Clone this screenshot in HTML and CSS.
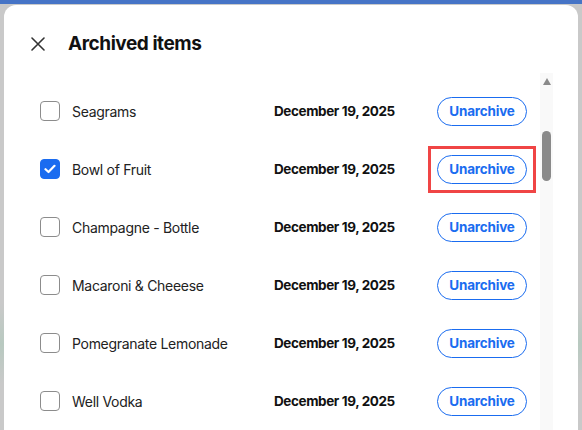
FILE: index.html
```html
<!DOCTYPE html>
<html>
<head>
<meta charset="utf-8">
<link rel="stylesheet" href="styles.css">
</head>
<body>
<div class="backdrop">
  <div class="modal">
    <div class="header">
      <svg class="close" width="14" height="14" viewBox="0 0 14 14"><path d="M1 1L13 13M13 1L1 13" stroke="#333" stroke-width="1.6" stroke-linecap="round"/></svg>
      <h1 class="title">Archived items</h1>
    </div>
    <div class="body">
      <div class="list">
        <div class="row"><span class="cb"></span><span class="name">Seagrams</span><span class="date">December 19, 2025</span><span class="btn-wrap"><button class="btn">Unarchive</button></span></div>
        <div class="row"><span class="cb checked"><svg width="12" height="10" viewBox="0 0 12 10"><path d="M1.5 5.2L4.5 8L10.5 1.8" fill="none" stroke="#fff" stroke-width="2.2" stroke-linecap="round" stroke-linejoin="round"/></svg></span><span class="name">Bowl of Fruit</span><span class="date">December 19, 2025</span><span class="btn-wrap highlight"><button class="btn">Unarchive</button></span></div>
        <div class="row"><span class="cb"></span><span class="name">Champagne - Bottle</span><span class="date">December 19, 2025</span><span class="btn-wrap"><button class="btn">Unarchive</button></span></div>
        <div class="row"><span class="cb"></span><span class="name">Macaroni &amp; Cheeese</span><span class="date">December 19, 2025</span><span class="btn-wrap"><button class="btn">Unarchive</button></span></div>
        <div class="row"><span class="cb"></span><span class="name">Pomegranate Lemonade</span><span class="date">December 19, 2025</span><span class="btn-wrap"><button class="btn">Unarchive</button></span></div>
        <div class="row"><span class="cb"></span><span class="name">Well Vodka</span><span class="date">December 19, 2025</span><span class="btn-wrap"><button class="btn">Unarchive</button></span></div>
      </div>
      <div class="scrollbar">
        <span class="arrow"></span>
        <span class="thumb"></span>
      </div>
    </div>
  </div>
</div>
</body>
</html>
```
FILE: styles.css
```css
html, body {
  margin: 0;
  padding: 0;
  width: 582px;
  height: 430px;
  overflow: hidden;
}
body {
  font-family: Inter, "Noto Sans", sans-serif;
  background: #c9c9c9;
}
.backdrop {
  height: 430px;
  box-sizing: border-box;
  border-top: 4px solid #4674c6;
  padding: 0 4px 0 4px;
  background: linear-gradient(to bottom, #c9c9c9 0, #c9c9c9 300px, #b8c9c0 340px, #c9c9c9 380px);
}
.modal {
  background: #fff;
  border-radius: 12px 12px 0 0;
  height: 440px;
  margin-top: 1px;
}
.header {
  display: flex;
  align-items: center;
  height: 72px;
  padding-left: 27px;
  box-sizing: border-box;
  padding-top: 5px;
}
.close {
  display: block;
  width: 14px;
  height: 14px;
}
.title {
  margin: 0 0 0 23px;
  font-size: 19px;
  font-weight: 700;
  color: #111;
  letter-spacing: -0.45px;
}
.body {
  display: flex;
}
.list {
  padding-top: 5px;
}
.row {
  display: flex;
  align-items: center;
  height: 58px;
  padding-left: 36px;
}
.cb {
  width: 20px;
  height: 20px;
  box-sizing: border-box;
  border: 1px solid #8c8c8c;
  border-radius: 4px;
  display: flex;
  align-items: center;
  justify-content: center;
  flex: none;
}
.cb.checked {
  background: #1a6cf0;
  border-color: #1a6cf0;
}
.name {
  margin-left: 12px;
  width: 202px;
  font-size: 14px;
  color: #222;
  letter-spacing: -0.3px;
}
.date {
  width: 163px;
  font-size: 13.5px;
  font-weight: 700;
  color: #111;
  letter-spacing: -0.4px;
}
.btn-wrap {
  display: flex;
}
.btn {
  width: 90px;
  height: 29px;
  border: 1px solid #1a6cf0;
  border-radius: 15px;
  background: #fff;
  color: #1a6cf0;
  font-family: Inter, "Noto Sans", sans-serif;
  font-size: 13.5px;
  font-weight: 700;
  letter-spacing: -0.2px;
  padding: 0;
}
.highlight {
  border: 3px solid #f04545;
  padding: 6px;
  margin: -9px;
}
.scrollbar {
  margin-left: 13px;
  margin-top: -4px;
  width: 13px;
  height: 360px;
  background: #f9f9f9;
  display: flex;
  flex-direction: column;
  align-items: center;
}
.arrow {
  margin-top: 5px;
  width: 0;
  height: 0;
  border-left: 4.5px solid transparent;
  border-right: 4.5px solid transparent;
  border-bottom: 7px solid #8a8a8a;
}
.thumb {
  margin-top: 46px;
  width: 9px;
  height: 50px;
  border-radius: 5px;
  background: #8a8a8a;
}
```
